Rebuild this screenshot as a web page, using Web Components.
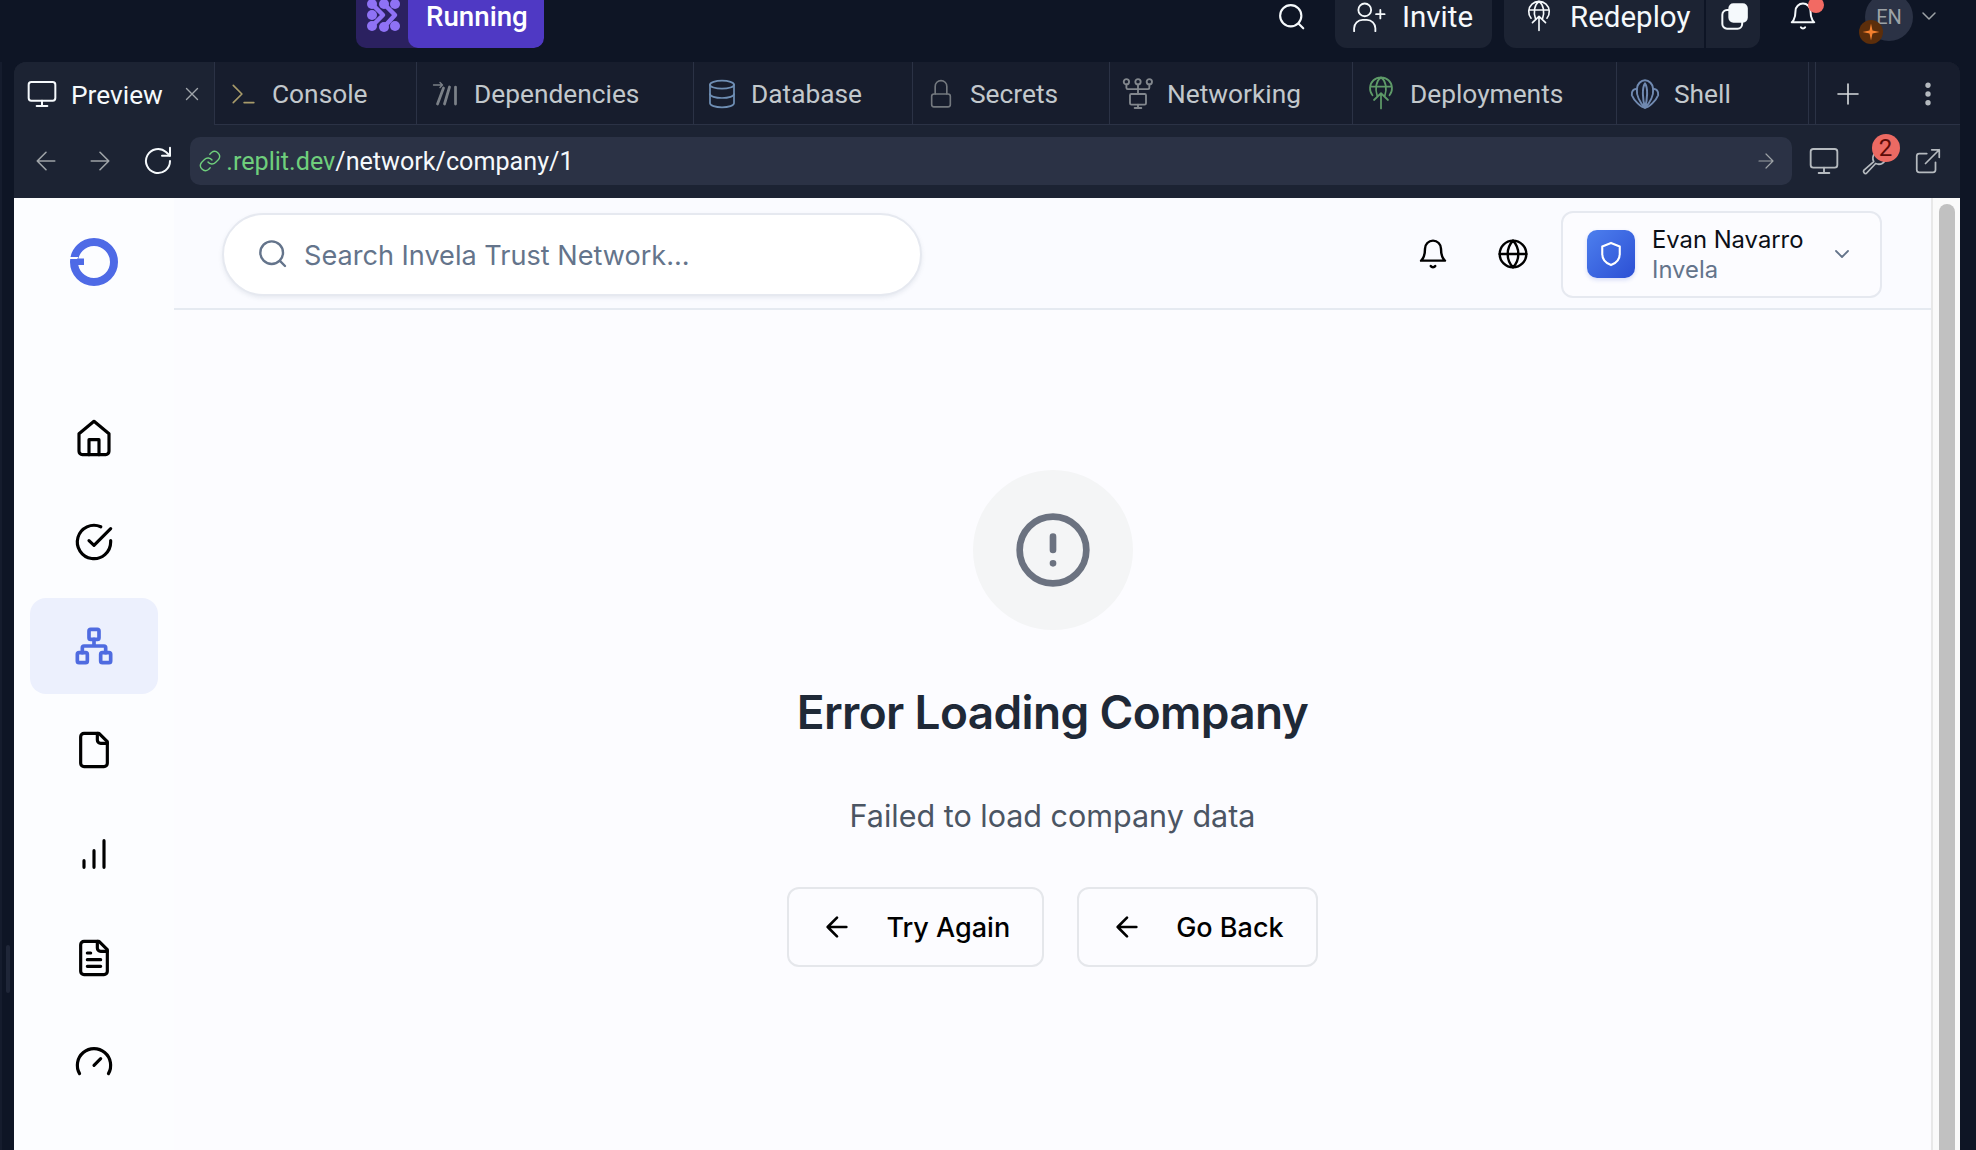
<!DOCTYPE html>
<html lang="en">
<head>
<meta charset="utf-8">
<title>Invela Trust Network</title>
<style>
  html, body { margin: 0; height: 100%; }
  body { width: 1976px; height: 1150px; overflow: hidden; background: #0e1525; }
</style>
</head>
<body>
<ide-topbar></ide-topbar>
<ide-workspace>
  <ide-tabs></ide-tabs>
  <ide-urlbar></ide-urlbar>
  <preview-page>
    <side-nav></side-nav>
    <page-main>
      <app-header></app-header>
      <error-state title="Error Loading Company" message="Failed to load company data">
        <action-button>Try Again</action-button>
        <action-button>Go Back</action-button>
      </error-state>
    </page-main>
  </preview-page>
</ide-workspace>

<script>
// Icon paths, 24x24 viewbox (a few run slightly over it on purpose)
const ICONS = {
  monitor: '<rect x="2" y="3" width="20" height="14" rx="2"/><path d="M8 21h8M12 17v4"/>',
  close: '<path d="M18 6 6 18M6 6l12 12"/>',
  prompt: '<path d="M3 4l8 8-8 8M13 20h9"/>',
  deps: '<path stroke-width="1.100" d="M2.800 4.800H10M8 2.800l2 2-2 2"/><path d="M6 20l4.800-12.800M11.600 20l4-13.600M20.400 20V6.400"/>',
  database: '<ellipse cx="12" cy="5" rx="9" ry="3"/><path d="M3 5v14c0 1.700 4 3 9 3s9-1.300 9-3V5"/><path d="M3 12c0 1.700 4 3 9 3s9-1.300 9-3"/>',
  lock: '<rect x="4" y="12" width="16" height="11" rx="2"/><path d="M7 12V5.500a5 5 0 0 1 10 0V12"/>',
  nettree: '<circle cx="3.300" cy="2.800" r="2"/><circle cx="12" cy="2.800" r="2"/><circle cx="20.500" cy="2.800" r="2"/><path d="M3.300 4.800V7.300a1 1 0 0 0 1 1h15.200a1 1 0 0 0 1-1V4.800M12 4.800V12"/><rect x="6" y="12" width="12" height="8" rx="1"/><path d="M12 20v2.500M9.500 22.500h5"/>',
  parachute: '<path d="M12 23.500V11.400M6.400 16.800 12 11.400l5.600 5.400"/><path d="M5.200 13A8.800 8.800 0 1 1 18.800 13M3.300 6h17.400M12-1.400c-4 3-5 9-3 15M12-1.400c4 3 5 9 3 15"/>',
  shell: '<path d="M12 23C9 23 3 17 1.500 13 1 10 3 7.500 5.500 8 5.500 4 9 1 12 1s6.500 3 6.500 7c2.500-.500 4.500 2 4 5C21 17 15 23 12 23Z"/><path d="M12 23C8 19 5 13 5.500 8M12 23c4-4 7-10 6.500-15M12 23C10 16 9.500 7 12 3.500 14.500 7 14 16 12 23Z"/>',
  plus: '<path d="M12 4v16M4 12h16"/>',
  dots: '<circle cx="12" cy="5" r="1.500" fill="currentColor"/><circle cx="12" cy="12" r="1.500" fill="currentColor"/><circle cx="12" cy="19" r="1.500" fill="currentColor"/>',
  arrowleft: '<path d="M19 12H5M12 19l-7-7 7-7"/>',
  arrowright: '<path d="M5 12h14M12 5l7 7-7 7"/>',
  reload: '<path d="M21 12a9 9 0 1 1-3-6.700L21 8"/><path d="M21 2v6h-6"/>',
  link: '<path d="M10 13a5 5 0 0 0 7.500.500l3-3a5 5 0 0 0-7-7l-1.700 1.700"/><path d="M14 11a5 5 0 0 0-7.500-.500l-3 3a5 5 0 0 0 7 7l1.700-1.700"/>',
  wrench: '<path d="M3 19.500 11 12.500a6 6 0 0 1 7-8.500M3 19.500a1.800 1.800 0 0 0 2 2.500L12.500 14a6 6 0 0 0 8.500-5"/>',
  external: '<path d="M18 13v6a2 2 0 0 1-2 2H5a2 2 0 0 1-2-2V8a2 2 0 0 1 2-2h6M15 3h6v6M10 14 21 3"/>',
  search: '<circle cx="11" cy="11" r="8.500"/><path d="m21 21-3.800-3.800"/>',
  userplus: '<circle cx="9" cy="7" r="4.500"/><path d="M1.500 22v-2a6 6 0 0 1 6-6h3a6 6 0 0 1 6 6v2M20 7v6M17 10h6"/>',
  copy: '<rect x="2" y="6" width="17" height="16" rx="4"/><rect x="8" y="1" width="15" height="15" rx="3.500" fill="currentColor"/>',
  bell: '<path d="M6 8a6 6 0 0 1 12 0c0 7 3 9 3 9H3s3-2 3-9"/><path d="M10.300 21a2 2 0 0 0 3.400 0"/>',
  globe: '<circle cx="12" cy="12" r="10"/><path d="M12 2a14.500 14.500 0 0 0 0 20 14.500 14.500 0 0 0 0-20M2 12h20"/>',
  chevron: '<path d="m6 9 6 6 6-6"/>',
  shield: '<path d="M12 2.500 19.500 5.500V12c0 5-3.500 8-7.500 9.500C8 20 4.500 17 4.500 12V5.500Z"/>',
  home: '<path d="M3 9.500 12 2l9 7.500V20a2 2 0 0 1-2 2H5a2 2 0 0 1-2-2Z"/><path d="M9 22V13h6v9"/>',
  check: '<path d="M22 11.080V12a10 10 0 1 1-5.930-9.140"/><path d="M22 4 12 14l-3-2.800"/>',
  network: '<rect x="16" y="16" width="6" height="6" rx="1"/><rect x="2" y="16" width="6" height="6" rx="1"/><rect x="9" y="2" width="6" height="6" rx="1"/><path d="M5 16v-3a1 1 0 0 1 1-1h12a1 1 0 0 1 1 1v3M12 12V8"/>',
  file: '<path d="M15 2H6a2 2 0 0 0-2 2v16a2 2 0 0 0 2 2h12a2 2 0 0 0 2-2V7Z"/><path d="M14 2v4a2 2 0 0 0 2 2h4"/>',
  chart: '<path d="M12 20V10M18 20V4M6 20v-4"/>',
  filetext: '<path d="M15 2H6a2 2 0 0 0-2 2v16a2 2 0 0 0 2 2h12a2 2 0 0 0 2-2V7Z"/><path d="M14 2v4a2 2 0 0 0 2 2h4M10 9H8M16 13H8M16 17H8"/>',
  gauge: '<path d="m12 14 4-4"/><path d="M3.340 19a10 10 0 1 1 17.320 0"/>',
  alert: '<circle cx="12" cy="12" r="10"/><path d="M12 8v4M12 16h.010"/>'
};

// Small helper so every component does the same shadow setup
class ShadowElement extends HTMLElement {
  constructor() {
    super();
    this.attachShadow({ mode: 'open' });
  }
  connectedCallback() {
    this.shadowRoot.innerHTML = this.render();
  }
}

class UiIcon extends ShadowElement {
  render() {
    const name = this.getAttribute('name');
    const size = this.getAttribute('size') || 24;
    const sw = this.getAttribute('sw') || 2;
    return `
      <style>:host { display: inline-flex; flex: none; line-height: 0; } svg { overflow: visible; }</style>
      <svg width="${size}" height="${size}" viewBox="0 0 24 24" fill="none" stroke="currentColor"
        stroke-width="${sw}" stroke-linecap="round" stroke-linejoin="round">${ICONS[name]}</svg>`;
  }
}

class IdeTopbar extends ShadowElement {
  render() {
    return `
      <style>
        :host {
          display: flex; align-items: flex-start; height: 62px; color: #f5f9fc;
          font: 400 29.500px/34px Roboto, sans-serif;
        }
        .pill { display: flex; height: 48px; margin-left: 356px; border-radius: 0 0 10px 10px; overflow: hidden; background: #2b2160; }
        .logo { width: 52px; height: 34px; color: #8f72f5; line-height: 0; }
        .state { width: 136px; box-sizing: border-box; padding-left: 18px; background: #4f39c4; border-radius: 0 0 10px 10px; font-size: 27.7px; font-weight: 500; color: #fff; }
        .find { margin: 2px 0 0 auto; line-height: 0; }
        .btn { display: flex; height: 48px; box-sizing: border-box; background: #1c2333; border-radius: 0 0 12px 12px; }
        .invite { width: 157px; margin-left: 28px; padding-left: 17px; gap: 16px; }
        .deploy { width: 256px; margin-left: 12px; }
        .deploy .main { width: 202px; display: flex; gap: 17px; padding-left: 21px; box-sizing: border-box; border-right: 2px solid #0e1525; }
        .deploy .side { flex: 1; padding: 3px 0 0 14px; line-height: 0; }
        .ico { height: 34px; display: flex; align-items: center; }
        .bell { position: relative; width: 32px; margin-left: 28px; padding-top: 1px; line-height: 0; }
        .bell i { position: absolute; left: 20px; top: -3px; width: 16px; height: 16px; border-radius: 50%; background: #f26a63; }
        .lang { position: relative; width: 48px; height: 48px; margin: -7px 0 0 45px; border-radius: 50%; background: #2b3245; color: #9da2a6; font-size: 20px; line-height: 48px; text-align: center; }
        .spark { position: absolute; left: -6px; top: 27px; width: 24px; height: 24px; border-radius: 50%; background: #5c2e0b; color: #f5802e; line-height: 0; }
        .caret { margin: 4px 35px 0 4px; color: #9da2a6; line-height: 0; }
      </style>
      <div class="pill">
        <div class="logo">
          <svg width="52" height="34" viewBox="0 0 52 34" fill="currentColor" stroke="none">
            <circle cx="16" cy="4" r="5"/><circle cx="28" cy="4" r="5"/><circle cx="39" cy="4" r="5"/>
            <circle cx="16" cy="15" r="5"/>
            <circle cx="16" cy="26" r="5"/><circle cx="28" cy="27" r="5"/><circle cx="39" cy="26" r="5"/>
            <path d="M16 4 27 15 16 26M28 4 39 15 28 27" fill="none" stroke="currentColor" stroke-width="4.500" stroke-linecap="round" stroke-linejoin="round"/>
          </svg>
        </div>
        <div class="state">Running</div>
      </div>
      <div class="find"><ui-icon name="search" size="30" sw="1.700"></ui-icon></div>
      <div class="btn invite"><span class="ico"><ui-icon name="userplus" size="34" sw="1.300"></ui-icon></span><span>Invite</span></div>
      <div class="btn deploy">
        <div class="main"><span class="ico"><ui-icon name="parachute" size="28" sw="1.400"></ui-icon></span><span>Redeploy</span></div>
        <div class="side"><ui-icon name="copy" size="28" sw="1.700"></ui-icon></div>
      </div>
      <div class="bell"><ui-icon name="bell" size="30" sw="1.600"></ui-icon><i></i></div>
      <div class="lang">EN<div class="spark"><svg width="24" height="24" viewBox="0 0 24 24" fill="currentColor"><path d="M12 3.500 13.500 10.500 20.500 12 13.500 13.500 12 20.500 10.500 13.500 3.500 12 10.500 10.500Z"/></svg></div></div>
      <div class="caret"><ui-icon name="chevron" size="24" sw="1.500"></ui-icon></div>`;
  }
}

class IdeWorkspace extends ShadowElement {
  render() {
    return `
      <style>
        :host { display: flex; height: 1088px; }
        .gutter { width: 12px; flex: none; border-left: 2px solid #151c2d; }
        .handle { width: 4px; height: 48px; margin: 883px 0 0 4px; border-radius: 2px; background: #1f2638; }
        .panel { width: 1946px; flex: none; display: flex; flex-direction: column; background: #1c2333; border-radius: 12px 12px 0 0; overflow: hidden; }
      </style>
      <div class="gutter"><div class="handle"></div></div>
      <div class="panel"><slot></slot></div>`;
  }
}

class IdeTab extends ShadowElement {
  render() {
    const active = this.hasAttribute('active');
    const width = this.getAttribute('width');
    const color = this.getAttribute('color') || '#a0a5ab';
    return `
      <style>
        :host {
          display: flex; align-items: center; flex: none; box-sizing: border-box; width: ${width}px; height: 63px;
          padding: 1px 0 0 13px; gap: 14px; border-right: 1px solid #2b3245;
          background: ${active ? '#1c2333' : '#171d2d'};
          ${active ? '' : 'border-bottom: 1px solid #2b3245;'}
          color: ${active ? '#f5f9fc' : '#c2c8cc'}; font: 400 26.3px/34px Roboto, sans-serif;
        }
        .ico { width: 30px; display: flex; justify-content: center; color: ${color}; }
        .lbl { padding-top: 1px; }
        .x { margin-left: auto; margin-right: 11px; color: #a0a5ab; line-height: 0; }
      </style>
      <span class="ico"><ui-icon name="${this.getAttribute('icon')}" size="${this.getAttribute('size') || 30}" sw="${this.getAttribute('sw') || 1.500}"></ui-icon></span>
      <span class="lbl"><slot></slot></span>
      ${active ? '<span class="x"><ui-icon name="close" size="22" sw="1.500"></ui-icon></span>' : ''}`;
  }
}

class IdeTabs extends ShadowElement {
  render() {
    return `
      <style>
        :host { display: flex; height: 63px; flex: none; }
        .gap { width: 7px; flex: none; background: #171d2d; border-right: 1px solid #2b3245; border-bottom: 1px solid #2b3245; box-sizing: border-box; }
        .tools { flex: 1; display: flex; align-items: center; padding-top: 1px; background: #171d2d; border-bottom: 1px solid #2b3245; color: #d7dadd; }
        .plus { margin-left: 17px; line-height: 0; }
        .dots { margin-left: 50px; line-height: 0; color: #b5babf; }
      </style>
      <ide-tab icon="monitor" width="201" color="#f5f9fc" size="32" active>Preview</ide-tab>
      <ide-tab icon="prompt" width="202" color="#a89b6a" size="26">Console</ide-tab>
      <ide-tab icon="deps" width="277" color="#7b8087" size="30" sw="2.200">Dependencies</ide-tab>
      <ide-tab icon="database" width="219" color="#6f8fb5" size="32" sw="1.300">Database</ide-tab>
      <ide-tab icon="lock" width="197" color="#73787e" size="28" sw="1.400">Secrets</ide-tab>
      <ide-tab icon="nettree" width="243" color="#82878d" size="32" sw="1.400">Networking</ide-tab>
      <ide-tab icon="parachute" width="264" color="#5e9a68" size="30" sw="1.400">Deployments</ide-tab>
      <ide-tab icon="shell" width="192" color="#7089b0" size="30" sw="1.600">Shell</ide-tab>
      <div class="gap"></div>
      <div class="tools">
        <span class="plus"><ui-icon name="plus" size="30" sw="1.300"></ui-icon></span>
        <span class="dots"><ui-icon name="dots" size="30" sw="1.300"></ui-icon></span>
      </div>`;
  }
}

class IdeUrlbar extends ShadowElement {
  render() {
    return `
      <style>
        :host { display: flex; align-items: center; height: 73px; flex: none; box-sizing: border-box; padding: 0 7px 1px 0; color: #f5f9fc; }
        .nav { display: flex; align-items: center; justify-content: center; width: 56px; line-height: 0; color: #9da2a6; }
        .nav.first { margin-left: 5px; }
        .reload { color: #f5f9fc; width: 56px; margin: 0 5px 0 4px; }
        .field { flex: none; width: 1602px; height: 48px; display: flex; align-items: center; box-sizing: border-box; padding: 0 14px 0 8px; background: #2b3245; border-radius: 10px; font: 400 25.15px/48px Roboto, sans-serif; }
        .link { color: #6fcf7c; line-height: 0; margin-right: 4px; }
        .url { padding-top: 2px; }
        .green { color: #6fcf7c; }
        .go { margin-left: auto; color: #9da2a6; line-height: 0; }
        .act { position: relative; display: flex; justify-content: center; width: 52px; color: #b5babf; line-height: 0; }
        .first-act { margin-left: 7px; }
        .last-act { margin-left: 3px; }
        .badge { position: absolute; left: 22px; top: -12px; width: 28px; height: 28px; border-radius: 50%; background: #ec6a63; color: #5c0c08; font: 400 24px/28px Roboto, sans-serif; text-align: center; }
      </style>
      <span class="nav first"><ui-icon name="arrowleft" size="30" sw="1.300"></ui-icon></span>
      <span class="nav"><ui-icon name="arrowright" size="30" sw="1.300"></ui-icon></span>
      <span class="nav reload"><ui-icon name="reload" size="32" sw="1.500"></ui-icon></span>
      <div class="field">
        <span class="link"><ui-icon name="link" size="24" sw="1.400"></ui-icon></span>
        <span class="url"><span class="green">.replit.dev</span>/network/company/1</span>
        <span class="go"><ui-icon name="arrowright" size="24" sw="1.200"></ui-icon></span>
      </div>
      <span class="act first-act"><ui-icon name="monitor" size="32" sw="1.400"></ui-icon></span>
      <span class="act"><ui-icon name="wrench" size="30" sw="1.400"></ui-icon><span class="badge">2</span></span>
      <span class="act last-act"><ui-icon name="external" size="30" sw="1.400"></ui-icon></span>`;
  }
}

class PreviewPage extends ShadowElement {
  render() {
    return `
      <style>
        :host { display: flex; flex: 1; min-height: 0; background: #fcfcff; }
        .track { width: 29px; flex: none; box-sizing: border-box; padding: 6px 6px 0 6px; background: #fafafa; border-left: 2px solid #e8e8e8; }
        .thumb { height: 100%; width: 16px; border-radius: 8px 8px 0 0; background: #c1c1c1; }
      </style>
      <slot></slot>
      <div class="track"><div class="thumb"></div></div>`;
  }
}

class SideNav extends ShadowElement {
  render() {
    const items = ['home', 'check', 'network', 'file', 'chart', 'filetext', 'gauge'];
    return `
      <style>
        :host { display: flex; flex-direction: column; width: 160px; flex: none; box-sizing: border-box; padding: 40px 16px 0; background: #fcfdff; }
        .logo { display: flex; justify-content: center; height: 48px; margin-bottom: 104px; }
        .item { display: flex; align-items: center; justify-content: center; flex: none; height: 96px; margin-bottom: 8px; border-radius: 16px; color: #000; }
        .item.on { background: #ecf0fd; color: #4f6be0; }
      </style>
      <div class="logo">
        <svg width="48" height="48" viewBox="0 0 48 48">
          <circle cx="24" cy="24" r="20" fill="none" stroke="#4e6ae6" stroke-width="8"/>
          <rect x="0" y="19" width="8" height="2" fill="#fcfdff"/>
          <rect x="7" y="20.500" width="7" height="6.500" fill="#4e6ae6"/>
        </svg>
      </div>
      ${items.map(name => `<div class="item${name === 'network' ? ' on' : ''}"><ui-icon name="${name}" size="40" sw="${name === 'network' ? 2.200 : 1.900}"></ui-icon></div>`).join('')}`;
  }
}

class PageMain extends ShadowElement {
  render() {
    return `
      <style>:host { display: flex; flex-direction: column; flex: 1; min-width: 0; }</style>
      <slot></slot>`;
  }
}

class AppHeader extends ShadowElement {
  render() {
    return `
      <style>
        :host {
          display: flex; align-items: center; flex: none; box-sizing: border-box; height: 112px; padding: 2px 49px 0 48px;
          background: #fafbff; border-bottom: 2px solid #e5eaf1; font-family: Inter, sans-serif;
        }
        .search {
          display: flex; align-items: center; gap: 15px; width: 700px; height: 83px; box-sizing: border-box; padding-left: 33px;
          background: #fff; border: 2px solid #e6e9f0; border-radius: 42px; box-shadow: 0 2px 4px rgba(100,116,139,.12);
          color: #64748b; font-size: 27.1px;
        }
        .search span { padding-top: 2px; }
        .icons { display: flex; margin-left: auto; gap: 48px; color: #000; line-height: 0; }
        .user {
          display: flex; align-items: center; width: 321px; height: 87px; box-sizing: border-box; margin-left: 32px; padding-left: 24px;
          background: #fcfcff; border: 2px solid #e6e9f0; border-radius: 12px;
        }
        .avatar {
          display: flex; align-items: center; justify-content: center; width: 48px; height: 48px; flex: none; border-radius: 10px;
          background: linear-gradient(135deg, #4d7fee, #2c4fd4); color: #fff; box-shadow: 0 2px 4px rgba(44,79,212,.18);
        }
        .who { margin-left: 17px; padding-top: 2px; font-size: 23.8px; line-height: 30px; color: #0b0f17; }
        .org { color: #64748b; }
        .more { margin-left: auto; margin-right: 26px; color: #64748b; line-height: 0; }
      </style>
      <div class="search"><ui-icon name="search" size="32" sw="1.800"></ui-icon><span>Search Invela Trust Network...</span></div>
      <div class="icons">
        <ui-icon name="bell" size="32" sw="1.800"></ui-icon>
        <ui-icon name="globe" size="32" sw="1.800"></ui-icon>
      </div>
      <div class="user">
        <div class="avatar"><ui-icon name="shield" size="28" sw="1.800"></ui-icon></div>
        <div class="who"><div>Evan Navarro</div><div class="org">Invela</div></div>
        <div class="more"><ui-icon name="chevron" size="24" sw="1.800"></ui-icon></div>
      </div>`;
  }
}

class ErrorState extends ShadowElement {
  render() {
    return `
      <style>
        :host { display: flex; flex-direction: column; align-items: center; flex: 1; padding-top: 160px; font-family: Inter, sans-serif; }
        .circle { display: flex; align-items: center; justify-content: center; width: 160px; height: 160px; border-radius: 50%; background: #f4f5f6; color: #6b7280; }
        h2 { margin: 53px 0 0; font-size: 46px; font-weight: 600; letter-spacing: -.66px; line-height: 58px; color: #1f2937; }
        p { margin: 53px 0 0; font-size: 30.5px; line-height: 44px; color: #4b5563; }
        .actions { display: flex; gap: 33px; margin-top: 49px; }
      </style>
      <div class="circle"><ui-icon name="alert" size="80" sw="2"></ui-icon></div>
      <h2>${this.getAttribute('title')}</h2>
      <p>${this.getAttribute('message')}</p>
      <div class="actions"><slot></slot></div>`;
  }
}

class ActionButton extends ShadowElement {
  render() {
    return `
      <style>
        :host {
          display: flex; align-items: center; height: 80px; box-sizing: border-box; padding: 0 32px; gap: 33px;
          background: #fcfcff; border: 2px solid #e5e7eb; border-radius: 12px; color: #000;
          font: 500 27px/1 Inter, sans-serif;
        }
      </style>
      <ui-icon name="arrowleft" size="32" sw="2"></ui-icon><slot></slot>`;
  }
}

customElements.define('ui-icon', UiIcon);
customElements.define('ide-topbar', IdeTopbar);
customElements.define('ide-workspace', IdeWorkspace);
customElements.define('ide-tab', IdeTab);
customElements.define('ide-tabs', IdeTabs);
customElements.define('ide-urlbar', IdeUrlbar);
customElements.define('preview-page', PreviewPage);
customElements.define('side-nav', SideNav);
customElements.define('page-main', PageMain);
customElements.define('app-header', AppHeader);
customElements.define('error-state', ErrorState);
customElements.define('action-button', ActionButton);
</script>
</body>
</html>
